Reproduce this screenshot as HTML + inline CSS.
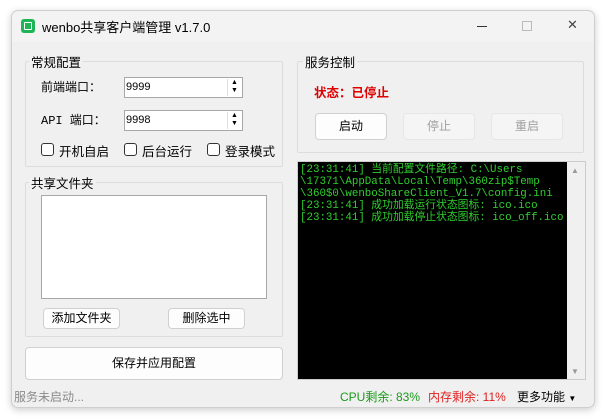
<!DOCTYPE html>
<html><head><meta charset="utf-8"><style>
*{margin:0;padding:0;box-sizing:border-box}
body{width:608px;height:419px;background:#fff;position:relative;overflow:hidden;font-family:"Liberation Sans","Noto Sans CJK SC",sans-serif;font-size:12px;color:#000}
.a{position:absolute}
.win{left:11px;top:10px;width:584px;height:398px;background:#f0f0f0;border:1px solid #cfcfcf;border-radius:7px;box-shadow:0 2px 8px rgba(0,0,0,.2);overflow:hidden}
.grp{border:1px solid #dcdcdc;border-radius:2px}
.gl{background:#f0f0f0;padding:0 2px;font-size:12.5px}
.spin{background:#fff;border:1px solid #a8a8a8;height:21px;width:119px;font-size:11px;padding:3px 1px}
.arr{position:absolute;right:1px;top:1px;width:14px;height:17px;border-left:1px solid #ddd;font-size:7px;line-height:8px;text-align:center;color:#000}
.cb{width:13px;height:13px;border:1px solid #333;border-radius:3px;background:#fff}
.btn{background:#fdfdfd;border:1px solid #d0d0d0;border-radius:4px;text-align:center;font-size:12px}
.dis{background:#f5f5f5;border-color:#e6e6e6;color:#a0a0a0}
.log{font-family:"Liberation Mono","Noto Sans CJK SC",monospace;color:#2fd02f;font-size:10.8px;line-height:12px;white-space:pre}
</style></head><body>
<div class="a win"></div>
<div class="a" style="left:12px;top:11px;width:582px;height:31px;background:#f3f3f3;border-radius:7px 7px 0 0"></div>
<div class="a" style="left:21px;top:19px;width:14px;height:14px;background:#1fb455;border-radius:3px"><div class="a" style="left:3px;top:3px;width:8px;height:8px;border:1.3px solid #fff;border-radius:1px"></div></div>
<div class="a" style="left:42px;top:17px;font-size:13px">wenbo共享客户端管理 v1.7.0</div>
<div class="a" style="left:477px;top:26px;width:10px;height:1px;background:#333"></div>
<div class="a" style="left:522px;top:21px;width:10px;height:10px;border:1px solid #bbb"></div>
<div class="a" style="left:567px;top:17px;font-size:13px;color:#444">✕</div>

<div class="a grp" style="left:25px;top:61px;width:258px;height:106px"></div>
<div class="a gl" style="left:29px;top:52px">常规配置</div>
<div class="a" style="left:41px;top:78px">前端端口：</div>
<div class="a spin" style="left:124px;top:77px">9999<div class="arr">▲<br>▼</div></div>
<div class="a" style="left:41px;top:111px;font-family:'Liberation Mono','Noto Sans CJK SC',monospace">API 端口：</div>
<div class="a spin" style="left:124px;top:110px">9998<div class="arr">▲<br>▼</div></div>
<div class="a cb" style="left:41px;top:143px"></div><div class="a" style="left:59px;top:141px;font-size:12.5px">开机自启</div>
<div class="a cb" style="left:124px;top:143px"></div><div class="a" style="left:142px;top:141px;font-size:12.5px">后台运行</div>
<div class="a cb" style="left:207px;top:143px"></div><div class="a" style="left:225px;top:141px;font-size:12.5px">登录模式</div>

<div class="a grp" style="left:25px;top:182px;width:258px;height:155px"></div>
<div class="a gl" style="left:29px;top:173px">共享文件夹</div>
<div class="a" style="left:41px;top:195px;width:226px;height:104px;background:#fff;border:1px solid #a8a8a8"></div>
<div class="a btn" style="left:43px;top:308px;width:77px;height:21px;line-height:19px">添加文件夹</div>
<div class="a btn" style="left:168px;top:308px;width:77px;height:21px;line-height:19px">删除选中</div>
<div class="a btn" style="left:25px;top:347px;width:258px;height:33px;line-height:31px">保存并应用配置</div>

<div class="a grp" style="left:297px;top:61px;width:287px;height:92px"></div>
<div class="a gl" style="left:303px;top:52px">服务控制</div>
<div class="a" style="left:314px;top:82px;color:#e00000;font-weight:bold;font-size:12.5px">状态：已停止</div>
<div class="a btn" style="left:315px;top:113px;width:72px;height:27px;line-height:25px">启动</div>
<div class="a btn dis" style="left:403px;top:113px;width:72px;height:27px;line-height:25px">停止</div>
<div class="a btn dis" style="left:491px;top:113px;width:72px;height:27px;line-height:25px">重启</div>

<div class="a" style="left:297px;top:161px;width:289px;height:219px;background:#000;border:1px solid #ccc"></div>
<div class="a" style="left:567px;top:162px;width:18px;height:217px;background:#f0f0f0"></div>
<div class="a" style="left:571px;top:166px;font-size:8px;color:#999">▲</div>
<div class="a" style="left:571px;top:367px;font-size:8px;color:#999">▼</div>
<div class="a log" style="left:300px;top:164px">[23:31:41] 当前配置文件路径: C:\Users
\17371\AppData\Local\Temp\360zip$Temp
\360$0\wenboShareClient_V1.7\config.ini
[23:31:41] 成功加载运行状态图标: ico.ico
[23:31:41] 成功加载停止状态图标: ico_off.ico</div>

<div class="a" style="left:14px;top:388px;color:#8a8a8a">服务未启动...</div>
<div class="a" style="left:340px;top:388px;color:#1a9a1a">CPU剩余: 83%</div>
<div class="a" style="left:428px;top:388px;color:#e02020">内存剩余: 11%</div>
<div class="a" style="left:517px;top:388px">更多功能 <span style="font-size:8px">▼</span></div>
</body></html>
